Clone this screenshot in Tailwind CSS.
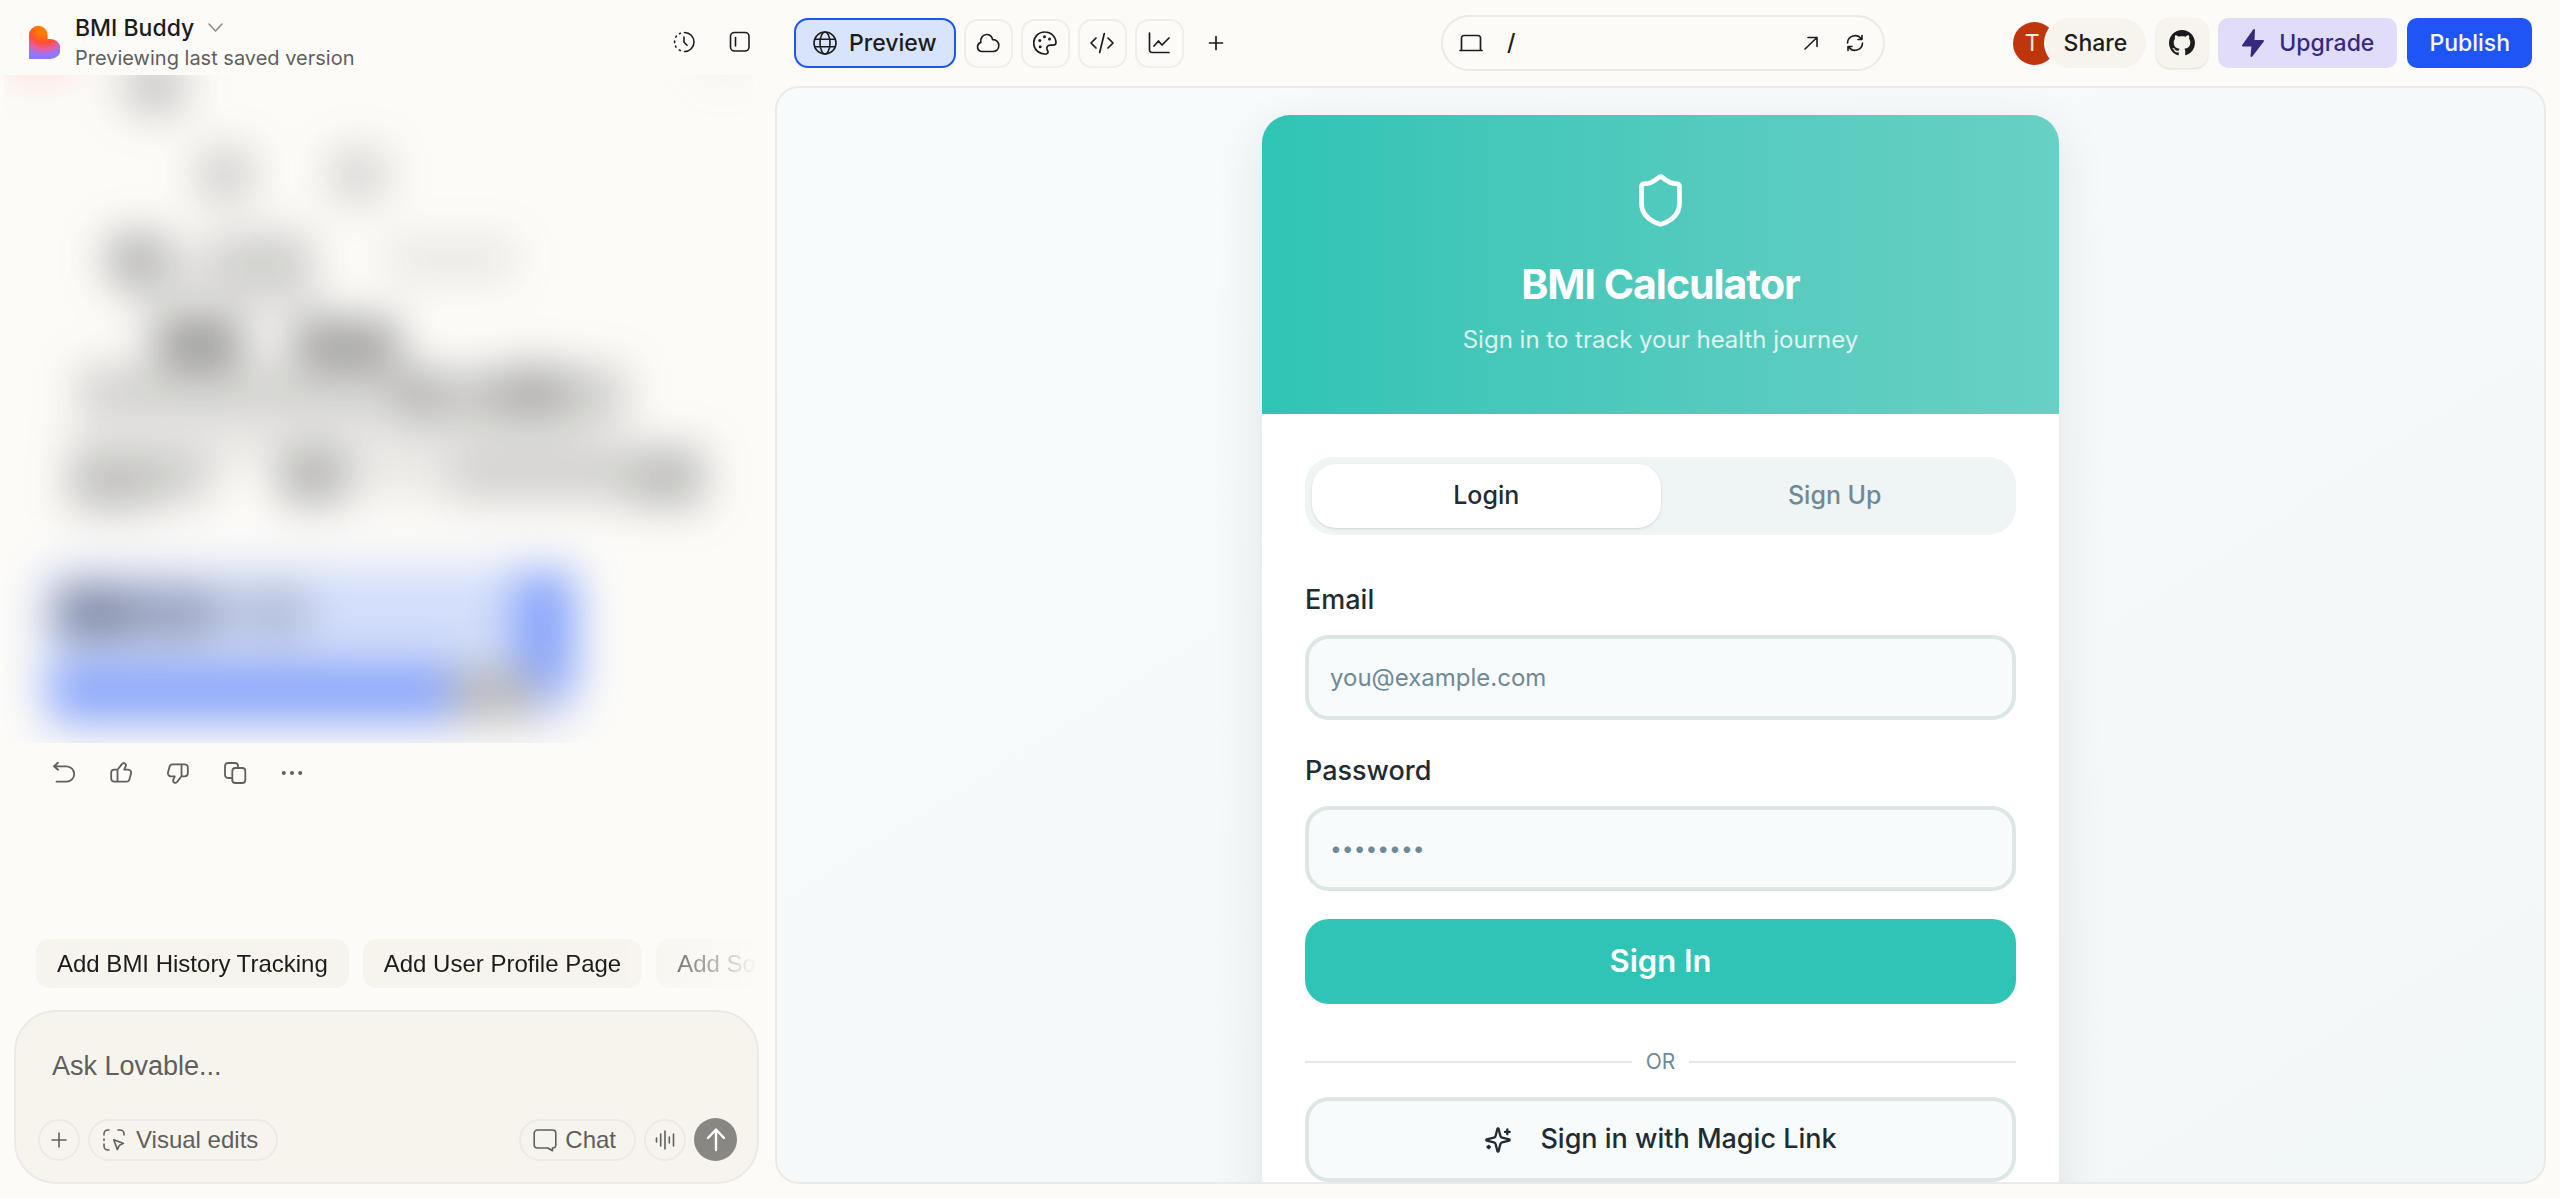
<!DOCTYPE html>
<html lang="en">
<head>
  <meta charset="UTF-8" />
  <meta name="viewport" content="width=device-width, initial-scale=1" />
  <title>BMI Buddy</title>
  <script src="https://cdn.jsdelivr.net/npm/@tailwindcss/browser@4"></script>
</head>
<body class="flex h-screen overflow-hidden bg-[#fcfbf8] font-['Inter',sans-serif] text-[23px] text-[#1c1c1c]">

  <!-- chat column -->
  <aside class="flex w-[30%] shrink-0 flex-col pb-[14px]">
    <header class="flex h-[75px] shrink-0 items-center gap-[15px] pt-[8px] pr-2 pl-[29px]">
      <svg class="h-[34px] w-[31px]" viewBox="0 0 31 34">
        <defs>
          <radialGradient id="heart" gradientUnits="userSpaceOnUse" cx="15" cy="3" r="34">
            <stop offset="0.2" stop-color="#ff7a00" />
            <stop offset="0.45" stop-color="#ff4f3a" />
            <stop offset="0.62" stop-color="#e85ca0" />
            <stop offset="0.82" stop-color="#8a78ff" />
          </radialGradient>
        </defs>
        <path fill="url(#heart)" d="M0 10a9.300 9.300 0 0 1 18.600 0v4h3a9.700 9.700 0 0 1 0 20H0z" />
      </svg>
      <div class="flex-1">
        <button class="flex items-center gap-[14px] leading-[32px] font-medium">
          BMI Buddy
          <svg class="h-[9px] w-[15px] text-[#8a8985]" viewBox="0 0 15 9" fill="none" stroke="currentColor" stroke-width="1.500" stroke-linecap="round" stroke-linejoin="round"><path d="M1 1l6.500 7L14 1" /></svg>
        </button>
        <p class="text-[20px] leading-[28px] text-[#5f5f5d]">Previewing last saved version</p>
      </div>
      <div class="flex gap-4">
        <button aria-label="History" class="flex size-10 items-center justify-center">
          <svg class="size-6" viewBox="0 0 24 24" fill="none" stroke="currentColor" stroke-width="1.600" stroke-linecap="round" stroke-linejoin="round"><path d="M12.500 2.500a9.500 9.500 0 0 1 0 19M12 7v5.300l3 3M8.300 3.300l-.8.400M4.400 6.200l-.6.900M2.600 11v1.600M3.500 16.200l.5.900M7.300 20l1 .6" /></svg>
        </button>
        <button aria-label="Toggle sidebar" class="flex size-10 items-center justify-center">
          <svg class="size-6" viewBox="0 0 24 24" fill="none" stroke="currentColor" stroke-width="1.600" stroke-linecap="round"><rect x="2.500" y="2.500" width="18.500" height="18.500" rx="4" /><path d="M7.500 7.500v8.500" /></svg>
        </button>
      </div>
    </header>

    <div class="min-h-0 flex-1">
      <!-- hidden conversation -->
      <svg class="block w-full pr-[15px] pl-1" viewBox="4 75 749 668" aria-hidden="true">
        <defs>
          <filter id="soft" filterUnits="userSpaceOnUse" x="-60" y="0" width="880" height="840" color-interpolation-filters="sRGB"><feGaussianBlur stdDeviation="22" /></filter>
        </defs>
        <g filter="url(#soft)">
          <rect x="5" y="40" width="70" height="36" fill="#ff5a4a" opacity="0.200" />
          <rect x="700" y="50" width="50" height="26" fill="#888" opacity="0.120" />
          <g fill="#4a4a4a">
            <rect x="126" y="60" width="58" height="52" opacity="0.300" />
            <rect x="198" y="150" width="54" height="50" opacity="0.260" />
            <rect x="330" y="150" width="56" height="50" opacity="0.220" />
            <rect x="108" y="234" width="56" height="50" opacity="0.420" />
            <rect x="164" y="240" width="52" height="44" opacity="0.130" />
            <rect x="216" y="234" width="96" height="50" opacity="0.260" />
            <rect x="386" y="238" width="130" height="42" opacity="0.110" />
            <rect x="130" y="276" width="190" height="44" opacity="0.120" />
            <rect x="156" y="320" width="86" height="46" opacity="0.560" />
            <rect x="294" y="320" width="104" height="46" opacity="0.520" />
            <rect x="78" y="366" width="350" height="48" opacity="0.240" />
            <rect x="400" y="372" width="98" height="48" opacity="0.320" />
            <rect x="498" y="366" width="70" height="54" opacity="0.440" />
            <rect x="568" y="368" width="58" height="50" opacity="0.260" />
            <rect x="70" y="415" width="550" height="50" opacity="0.100" />
            <rect x="70" y="456" width="84" height="54" opacity="0.340" />
            <rect x="154" y="454" width="56" height="48" opacity="0.250" />
            <rect x="280" y="450" width="66" height="54" opacity="0.400" />
            <rect x="350" y="458" width="100" height="44" opacity="0.080" />
            <rect x="450" y="452" width="180" height="50" opacity="0.220" />
            <rect x="630" y="448" width="74" height="58" opacity="0.360" />
          </g>
          <rect x="40" y="568" width="534" height="156" rx="24" fill="#d2ddfa" />
          <rect x="514" y="572" width="62" height="122" fill="#88a4fa" />
          <rect x="52" y="664" width="400" height="58" fill="#8ba6fa" />
          <rect x="452" y="668" width="84" height="52" fill="#b9b8b9" />
          <g fill="#3a3f52">
            <rect x="58" y="588" width="66" height="50" opacity="0.560" />
            <rect x="124" y="588" width="88" height="50" opacity="0.400" />
            <rect x="212" y="590" width="50" height="44" opacity="0.160" />
            <rect x="262" y="588" width="44" height="50" opacity="0.240" />
          </g>
        </g>
      </svg>

      <div class="mt-2.5 flex gap-[17px] pl-11 text-[#5f5f5d]">
        <button aria-label="Revert" class="flex size-10 items-center justify-center">
          <svg class="size-6" viewBox="0 0 24 24" fill="none" stroke="currentColor" stroke-width="1.800" stroke-linecap="round" stroke-linejoin="round"><path d="M6 1.800L2 5.300l4 3.500M2.200 5.300h12.300a7.700 7.700 0 0 1 0 15.400H4.500" /></svg>
        </button>
        <button aria-label="Like" class="flex size-10 items-center justify-center">
          <svg class="size-6" viewBox="0 0 24 24" fill="none" stroke="currentColor" stroke-width="1.800" stroke-linecap="round" stroke-linejoin="round"><path id="thumb" d="M8.500 20.700H5.200a3 3 0 0 1-3-3v-6a3 3 0 0 1 3-3h3.300zM8.500 8.700l4.200-5.300c1.200-2.400 5.200-.9 4 1.900L15.200 8.700h3.900a3 3 0 0 1 2.900 3.800l-1.600 5.900a3 3 0 0 1-2.900 2.300h-9" /></svg>
        </button>
        <button aria-label="Dislike" class="flex size-10 items-center justify-center">
          <svg class="size-6" viewBox="0 0 24 24" fill="none" stroke="currentColor" stroke-width="1.800" stroke-linecap="round" stroke-linejoin="round"><use href="#thumb" transform="rotate(180 12 12)" /></svg>
        </button>
        <button aria-label="Copy" class="flex size-10 items-center justify-center">
          <svg class="size-6" viewBox="0 0 24 24" fill="none" stroke="currentColor" stroke-width="1.800" stroke-linecap="round" stroke-linejoin="round"><rect x="9.300" y="7" width="13" height="15" rx="3" /><path d="M9.300 17H5a3 3 0 0 1-3-3V5a3 3 0 0 1 3-3h7a3 3 0 0 1 3 3v2" /></svg>
        </button>
        <button aria-label="More" class="flex size-10 items-center justify-center">
          <svg class="size-6" viewBox="0 0 24 24" fill="currentColor"><circle cx="3.800" cy="12" r="2" /><circle cx="12" cy="12" r="2" /><circle cx="20.200" cy="12" r="2" /></svg>
        </button>
      </div>
    </div>

    <div class="mr-[10px] mb-[22px] flex gap-[14px] overflow-hidden mask-r-from-82% mask-r-to-100% pl-9 font-['Liberation_Sans',sans-serif] text-[24px] whitespace-nowrap">
      <button class="h-[49px] rounded-[14px] bg-[#f7f4ed] px-[21px]">Add BMI History Tracking</button>
      <button class="h-[49px] rounded-[14px] bg-[#f7f4ed] px-[21px]">Add User Profile Page</button>
      <button class="h-[49px] rounded-[14px] bg-[#f7f4ed] px-[21px]">Add So</button>
    </div>

    <form class="mr-[9px] ml-[14px] flex h-[174px] flex-col justify-between rounded-[42px] border-2 border-[#eceae4] bg-[#f7f4ed] pt-9 pr-[20px] pb-[21px] pl-[22px] font-['Liberation_Sans',sans-serif] text-[24px] text-[#5f5f5d]">
      <input aria-label="Ask Lovable" placeholder="Ask Lovable..." class="h-9 w-full px-[14px] text-[27px] outline-none placeholder:text-[#5f5f5d]" />
      <div class="flex items-center gap-2">
        <button type="button" aria-label="Attach" class="flex size-[42px] items-center justify-center rounded-full border-2 border-[#eceae4]">
          <svg class="size-4" viewBox="0 0 16 16" fill="none" stroke="currentColor" stroke-width="1.600" stroke-linecap="round"><path d="M8 1v14M1 8h14" /></svg>
        </button>
        <button type="button" class="mr-auto flex h-[42px] items-center gap-[10px] rounded-full border-2 border-[#eceae4] pr-[18px] pl-[12px]">
          <svg class="size-6" viewBox="0 0 24 24" fill="none" stroke="currentColor" stroke-width="1.600" stroke-linecap="round" stroke-linejoin="round"><path d="M2 7V6a4 4 0 0 1 4-4h1M16 2h2a4 4 0 0 1 4 4v1M2 16v2a4 4 0 0 0 4 4h1M2 11v1.500M11.800 11.800l9.700 3.600-4.200 2-2 4.200z" /></svg>
          Visual edits
        </button>
        <button type="button" class="flex h-[42px] items-center gap-2 rounded-full border-2 border-[#eceae4] pr-[18px] pl-[12px]">
          <svg class="size-6" viewBox="0 0 24 24" fill="none" stroke="currentColor" stroke-width="1.600" stroke-linecap="round" stroke-linejoin="round"><path d="M4.500 2h15A3.300 3.300 0 0 1 22.800 5.300v11.400a3.300 3.300 0 0 1-3.300 3.300v2.800L14.800 20H4.500a3.300 3.300 0 0 1-3.300-3.300V5.300A3.300 3.300 0 0 1 4.500 2z" /></svg>
          Chat
        </button>
        <button type="button" aria-label="Voice" class="flex size-[42px] items-center justify-center rounded-full border-2 border-[#eceae4]">
          <svg class="size-5" viewBox="0 0 20 20" fill="none" stroke="currentColor" stroke-width="1.600" stroke-linecap="round"><path d="M1.500 8v4M5.700 4v12M10 1v18M14.300 7v6M18.500 4v12" /></svg>
        </button>
        <button aria-label="Send" class="flex size-[43px] items-center justify-center rounded-full bg-[#888782] text-white">
          <svg class="size-6" viewBox="0 0 24 24" fill="none" stroke="currentColor" stroke-width="2.400" stroke-linecap="round" stroke-linejoin="round"><path d="M12 22V2M4 10l8-8.500 8 8.500" /></svg>
        </button>
      </div>
    </form>
  </aside>

  <!-- preview column -->
  <main class="flex min-w-0 flex-1 flex-col pr-[14px] pb-[14px] pl-[7px]">
    <header class="grid h-[86px] shrink-0 grid-cols-[1fr_auto_1fr] items-center pr-[14px] pl-[19px]">
      <nav class="flex items-center gap-2">
        <button class="flex h-[50px] items-center gap-[12px] rounded-[14px] border-2 border-[#1f55f5] bg-[#d8e4fb] px-[17px] font-medium">
          <svg class="size-6" viewBox="0 0 24 24" fill="none" stroke="currentColor" stroke-width="1.600"><circle cx="12" cy="12" r="11" /><ellipse cx="12" cy="12" rx="5" ry="11" /><path d="M2 8.300h20M2 15.700h20" /></svg>
          Preview
        </button>
        <button aria-label="Cloud" class="flex size-[49px] items-center justify-center rounded-[14px] border-2 border-[#f0eee9]">
          <svg class="size-6" viewBox="0 0 24 24" fill="none" stroke="currentColor" stroke-width="1.700" stroke-linejoin="round"><path d="M5.500 20.500A4.600 4.600 0 0 1 4.700 11.600C4.300 6.800 7 3.500 10.700 3.500c3.300 0 5.300 2.200 5.900 5.200 3.500-.2 6.200 2.300 6.200 5.800s-2.500 6-5.800 6z" /></svg>
        </button>
        <button aria-label="Design" class="flex size-[49px] items-center justify-center rounded-[14px] border-2 border-[#f0eee9]">
          <svg class="size-6" viewBox="0 0 24 24" fill="none" stroke="currentColor" stroke-width="1.700" stroke-linejoin="round"><path d="M12 1a11 11 0 1 0 1.800 21.800c1.500-.5 1.500-2 .7-3.300-1.600-2.700-.3-5.300 2.700-5.300h2.500c2 0 3.300-1 3.300-2.700C22.700 5.500 18 1 12 1z" /><g fill="currentColor" stroke="none"><circle cx="11.500" cy="5.800" r="1.500" /><circle cx="6.800" cy="9.600" r="1.500" /><circle cx="7.200" cy="15.700" r="1.500" /><circle cx="16.500" cy="8" r="1.500" /></g></svg>
        </button>
        <button aria-label="Code" class="flex size-[49px] items-center justify-center rounded-[14px] border-2 border-[#f0eee9]">
          <svg class="size-6" viewBox="0 0 24 24" fill="none" stroke="currentColor" stroke-width="1.700" stroke-linecap="round" stroke-linejoin="round"><path d="M6 7l-5 5 5 5M18 7l5 5-5 5M14.300 2.500l-4.600 19" /></svg>
        </button>
        <button aria-label="Analytics" class="flex size-[49px] items-center justify-center rounded-[14px] border-2 border-[#f0eee9]">
          <svg class="size-6" viewBox="0 0 24 24" fill="none" stroke="currentColor" stroke-width="1.700" stroke-linecap="round" stroke-linejoin="round"><path d="M2.500 2v17a2.500 2.500 0 0 0 2.500 2.500h17M7 15l4.500-5 3.500 4 7-7" /></svg>
        </button>
        <button aria-label="Add" class="flex size-[49px] items-center justify-center">
          <svg class="size-4" viewBox="0 0 16 16" fill="none" stroke="currentColor" stroke-width="1.700" stroke-linecap="round"><path d="M8 1.500v13M1.500 8h13" /></svg>
        </button>
      </nav>

      <div class="flex h-[56px] w-[444px] items-center rounded-full border-2 border-[#eceae4] pr-[18px] pl-4">
        <button aria-label="Device">
          <svg class="h-6 w-6" viewBox="0 0 24 24" fill="none" stroke="currentColor" stroke-width="1.700" stroke-linecap="round"><path d="M2.500 19.500V7A2.500 2.500 0 0 1 5 4.500h14A2.500 2.500 0 0 1 21.500 7v12.500M1 19.500h22" /></svg>
        </button>
        <input aria-label="Path" value="/" class="ml-6 min-w-0 flex-1 font-medium outline-none" />
        <button aria-label="Open in new tab" class="mr-6">
          <svg class="size-5" viewBox="0 0 20 20" fill="none" stroke="currentColor" stroke-width="1.600" stroke-linecap="round" stroke-linejoin="round"><path d="M4 16L16 4.500M7 4.500h9v9" /></svg>
        </button>
        <button aria-label="Reload">
          <svg class="size-5" viewBox="0 0 20 20" fill="none" stroke="currentColor" stroke-width="1.600" stroke-linecap="round" stroke-linejoin="round"><path d="M2.500 10A7.500 7.500 0 0 1 16.500 6.500M17.500 10A7.500 7.500 0 0 1 3.500 13.500M17 2.500v4h-4M3 17.500v-4h4" /></svg>
        </button>
      </div>

      <div class="flex items-center justify-end gap-[10px]">
        <div class="flex items-center">
          <span class="flex size-[43px] items-center justify-center rounded-full bg-[#c0360c] pr-1 text-[#ffe9df]">T</span>
          <button class="-ml-[12px] h-[50px] rounded-full border-l-2 border-[#fcfbf8] bg-[#f7f4ed] pr-[19px] pl-[18px] font-medium">Share</button>
        </div>
        <button aria-label="GitHub" class="flex h-[50px] w-[52px] items-center justify-center rounded-[14px] bg-[#f7f4ed] shadow-sm">
          <svg class="size-[26px]" viewBox="0 0 16 16" fill="currentColor"><path d="M8 0C3.580 0 0 3.580 0 8c0 3.540 2.290 6.530 5.470 7.590.4.070.55-.17.55-.38 0-.19-.01-.82-.01-1.490-2.010.37-2.530-.49-2.690-.94-.09-.23-.48-.94-.82-1.130-.28-.15-.68-.52-.01-.53.63-.01 1.080.58 1.230.82.72 1.210 1.870.87 2.330.66.070-.52.280-.87.510-1.070-1.780-.2-3.640-.89-3.640-3.950 0-.87.310-1.590.82-2.150-.08-.2-.36-1.020.08-2.120 0 0 .67-.21 2.200.82.64-.18 1.320-.27 2-.27s1.360.09 2 .27c1.530-1.040 2.200-.82 2.200-.82.44 1.100.16 1.920.08 2.120.51.56.82 1.270.82 2.150 0 3.070-1.870 3.750-3.650 3.950.29.25.54.73.54 1.480 0 1.070-.01 1.930-.01 2.200 0 .21.15.46.55.38A8.010 8.010 0 0 0 16 8c0-4.420-3.580-8-8-8z" /></svg>
        </button>
        <button class="flex h-[50px] items-center gap-[14px] rounded-[10px] bg-[#e1ddf9] px-[23px] font-medium text-[#38297f]">
          <svg class="h-[30px] w-6" viewBox="0 0 24 30" fill="currentColor" stroke="currentColor" stroke-width="2" stroke-linejoin="round"><path d="M13 2L2 17.500h9.500L10.500 28 22 13h-9.500z" /></svg>
          Upgrade
        </button>
        <button class="h-[50px] rounded-[10px] bg-[#1f55f5] px-[22px] font-medium text-[#f7f8ff]">Publish</button>
      </div>
    </header>

    <section class="min-h-0 flex-1 overflow-hidden rounded-[24px] border-2 border-[#eceae4] bg-linear-to-br from-[#f8fbfc] to-[#f2f7f8] pt-[27px] text-[#1f2c33]">
      <div class="mx-auto w-full max-w-[797px] overflow-hidden rounded-[28px] bg-white shadow-[0_16px_50px_rgba(31,44,51,0.1)]">
        <div class="flex h-[299px] flex-col items-center bg-linear-to-r from-[#2fc4b5] to-[#68d0c4] pt-[57px] text-white">
          <svg class="size-[57px]" viewBox="0 0 24 24" fill="none" stroke="currentColor" stroke-width="2" stroke-linecap="round" stroke-linejoin="round"><path d="M20 13c0 5-3.500 7.500-7.660 8.950a1 1 0 0 1-.67-.01C7.500 20.500 4 18 4 13V6a1 1 0 0 1 1-1c2 0 4.500-1.200 6.240-2.720a1.170 1.170 0 0 1 1.520 0C14.510 3.810 17 5 19 5a1 1 0 0 1 1 1z" /></svg>
          <h1 class="mt-[27px] text-[41px] leading-[56px] font-bold tracking-tight">BMI Calculator</h1>
          <p class="mt-2.5 text-[24px] leading-9 text-white/80">Sign in to track your health journey</p>
        </div>

        <div class="px-[43px] pt-[43px] pb-12">
          <div class="grid h-[78px] grid-cols-2 rounded-[28px] bg-[#eff4f4] p-[7px] text-[25px] font-medium">
            <button class="rounded-[24px] bg-white shadow-sm">Login</button>
            <button class="text-[#6f8a96]">Sign Up</button>
          </div>

          <form>
            <label for="email" class="mt-[45px] block text-[27px] leading-10 font-medium">Email</label>
            <input id="email" type="email" placeholder="you@example.com" class="mt-[15px] h-[85px] w-full rounded-[24px] border-4 border-[#dbe6e5] bg-[#f7fbfc] px-[21px] text-[24px] outline-none placeholder:text-[#6f8a96]" />
            <label for="password" class="mt-[31px] block text-[27px] leading-10 font-medium">Password</label>
            <input id="password" type="password" placeholder="••••••••" class="mt-[15px] h-[85px] w-full rounded-[24px] border-4 border-[#dbe6e5] bg-[#f7fbfc] px-[21px] text-[21px] outline-none placeholder:text-[#6f8a96]" />
            <button class="mt-7 h-[85px] w-full rounded-[24px] bg-[#2fc4b5] text-[31px] font-semibold text-white">Sign In</button>
          </form>

          <div class="mt-[44px] mb-[21px] flex h-7 items-center gap-[14px] text-[21px] text-[#6f8a96]">
            <hr class="flex-1 border-t-2 border-[#e4e8ea]" />
            OR
            <hr class="flex-1 border-t-2 border-[#e4e8ea]" />
          </div>

          <button class="flex h-[85px] w-full items-center justify-center gap-7 rounded-[24px] border-4 border-[#dbe6e5] bg-[#f7fbfc] text-[27px] font-medium">
            <svg class="size-7" viewBox="0 0 24 24" fill="none" stroke="currentColor" stroke-width="2" stroke-linecap="round" stroke-linejoin="round"><path d="M9.940 15.500A2 2 0 0 0 8.500 14.060l-6.140-1.580a.5.500 0 0 1 0-.96L8.500 9.940A2 2 0 0 0 9.940 8.500l1.580-6.140a.5.500 0 0 1 .96 0L14.060 8.500A2 2 0 0 0 15.500 9.940l6.140 1.580a.5.500 0 0 1 0 .96L15.500 14.060a2 2 0 0 0-1.440 1.440l-1.580 6.140a.5.500 0 0 1-.96 0zM20 3v4M22 5h-4M4 17v2M5 18H3" /></svg>
            Sign in with Magic Link
          </button>
        </div>
      </div>
    </section>
  </main>

</body>
</html>
